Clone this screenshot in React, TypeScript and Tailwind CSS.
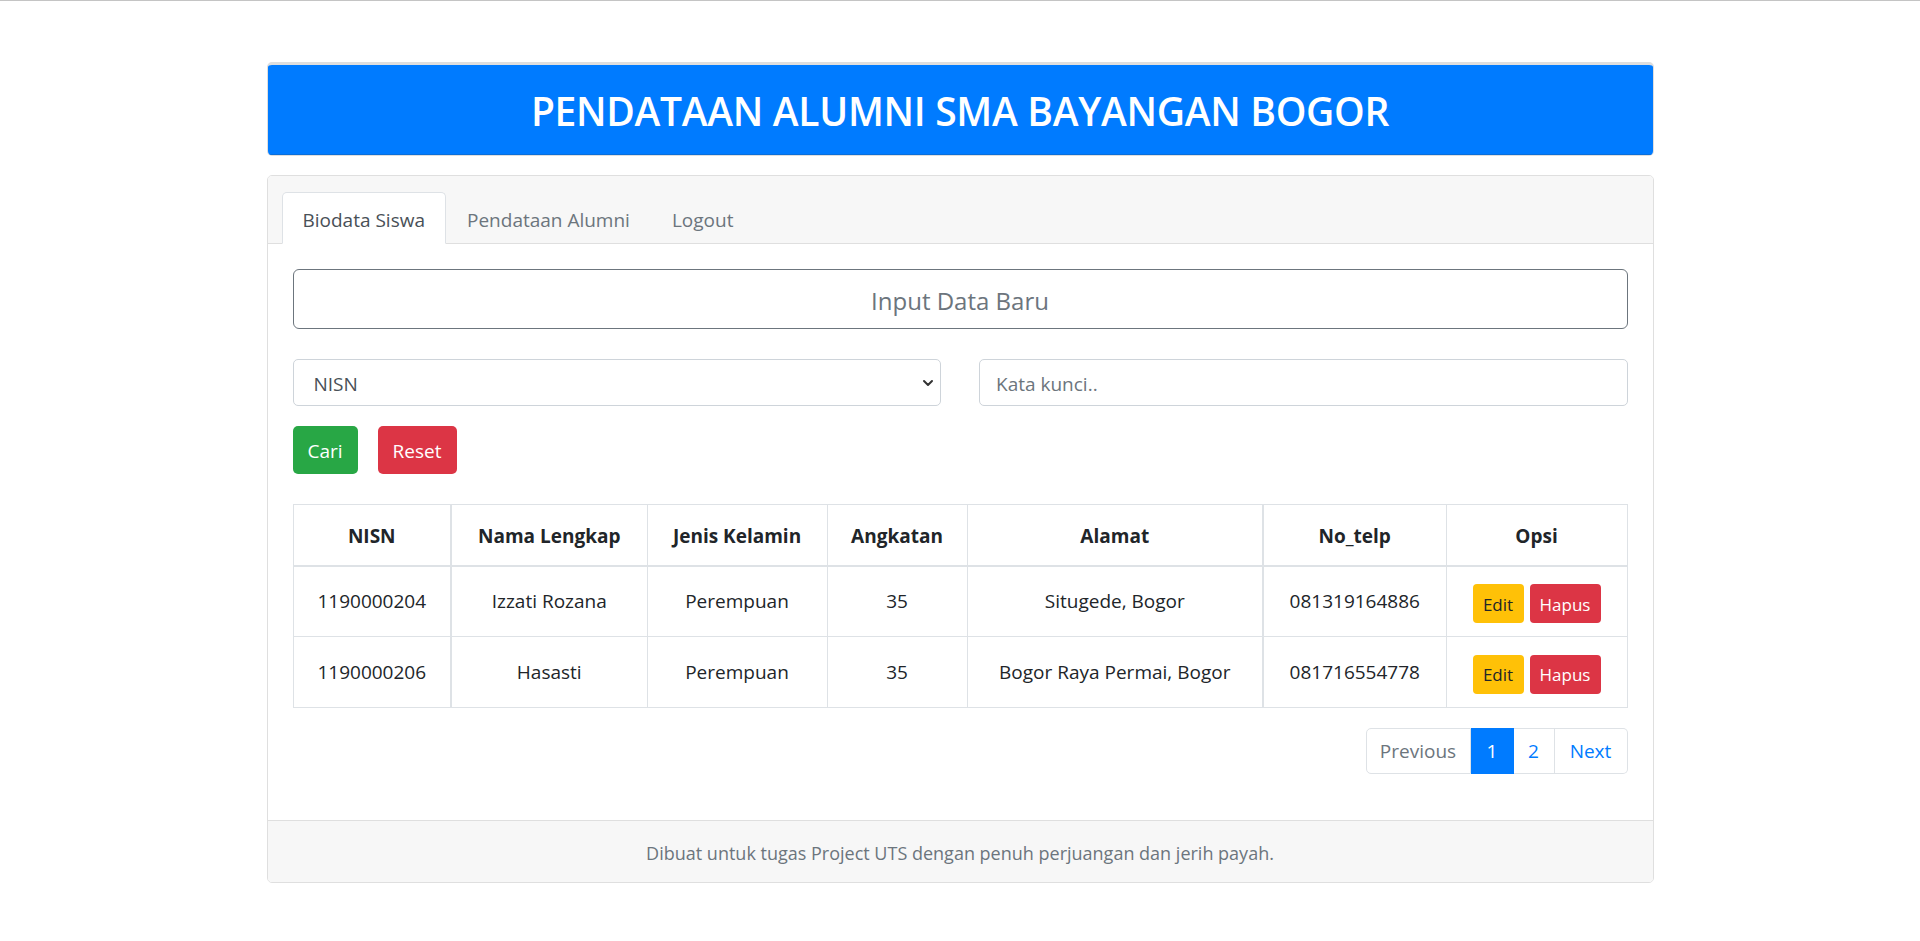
import { ChevronDown } from 'lucide-react';

interface Siswa {
  nisn: string;
  nama: string;
  jk: string;
  angkatan: string;
  alamat: string;
  telp: string;
}

const data: Siswa[] = [
  { nisn: '1190000204', nama: 'Izzati Rozana', jk: 'Perempuan', angkatan: '35', alamat: 'Situgede, Bogor', telp: '081319164886' },
  { nisn: '1190000206', nama: 'Hasasti', jk: 'Perempuan', angkatan: '35', alamat: 'Bogor Raya Permai, Bogor', telp: '081716554778' },
];

const headers = ['NISN', 'Nama Lengkap', 'Jenis Kelamin', 'Angkatan', 'Alamat', 'No_telp', 'Opsi'];

export default function App() {
  return (
    <div className="min-h-screen bg-white border-t border-[#c4c4c4] text-[#212529] font-['Open_Sans',sans-serif]">
      <div className="w-[1387px] mx-auto pt-[61px]">
        {/* Judul */}
        <div className="border-x border-b border-t-[3px] border-[#dedede] rounded-[5px] overflow-hidden">
          <div className="h-[90px] bg-[#007bff] border-b border-[#0a6ed9] flex items-center justify-center">
            <h2 className="text-[39px] leading-[48px] font-semibold text-white tracking-[-0.3px] pt-[2px]">
              PENDATAAN ALUMNI SMA BAYANGAN BOGOR
            </h2>
          </div>
        </div>

        {/* Konten */}
        <div className="mt-[19px] border border-[#dfdfdf] rounded-[5px] overflow-hidden">
          <div className="bg-[#f7f7f7] border-b border-[#dfdfdf] pt-[16px] pl-[14px] flex">
            <div className="h-[52px] -mb-px px-[20px] pt-[5px] flex items-center bg-white border border-[#dee2e6] border-b-white rounded-t-[5px] text-[19px] text-[#495057]">
              Biodata Siswa
            </div>
            <div className="h-[52px] -mb-px px-[20px] pt-[5px] flex items-center border border-transparent text-[19px] text-[#6c757d]">
              Pendataan Alumni
            </div>
            <div className="h-[52px] -mb-px px-[20px] pt-[5px] flex items-center border border-transparent text-[19px] text-[#6c757d]">
              Logout
            </div>
          </div>

          <div className="px-[25px] pt-[25px] pb-[46px]">
            <button className="w-full h-[60px] pt-[3px] border border-[#6c757d] rounded-[6px] text-[24px] text-[#6c757d] bg-white">
              Input Data Baru
            </button>

            <div className="mt-[30px] grid grid-cols-2 gap-x-[38px]">
              <div className="relative">
                <select className="w-full h-[47px] appearance-none border border-[#ced4da] rounded-[5px] pl-[20px] pr-[40px] pt-[3px] text-[19px] text-[#495057] bg-white outline-none">
                  <option>NISN</option>
                  <option>Nama Lengkap</option>
                  <option>Angkatan</option>
                </select>
                <ChevronDown className="absolute right-[5px] top-[16px] w-[16px] h-[16px] text-[#333]" strokeWidth={3} />
              </div>
              <input
                className="w-full h-[47px] border border-[#ced4da] rounded-[5px] px-[16px] pt-[3px] text-[19px] text-[#495057] placeholder:text-[#6c757d] outline-none"
                placeholder="Kata kunci.."
              />
            </div>

            <div className="mt-[20px] flex gap-[20px]">
              <button className="h-[48px] px-[15px] pt-[3px] rounded-[5px] bg-[#28a745] text-white text-[19px]">Cari</button>
              <button className="h-[48px] px-[15px] pt-[3px] rounded-[5px] bg-[#dc3545] text-white text-[19px]">Reset</button>
            </div>

            <table className="mt-[30px] w-full table-fixed border-collapse border border-[#dee2e6] text-[19px]">
              <colgroup>
                <col className="w-[158px]" />
                <col className="w-[196px]" />
                <col className="w-[180px]" />
                <col className="w-[140px]" />
                <col className="w-[296px]" />
                <col className="w-[183px]" />
                <col />
              </colgroup>
              <thead>
                <tr>
                  {headers.map((h, i) => (
                    <th
                      key={h}
                      className={`h-[61px] pt-[3px] border border-b-2 border-[#dee2e6] font-bold text-center ${i === 0 || i === 4 ? 'border-r-2' : ''}`}
                    >
                      {h}
                    </th>
                  ))}
                </tr>
              </thead>
              <tbody>
                {data.map((s) => (
                  <tr key={s.nisn}>
                    <td className="h-[71px] border border-r-2 border-[#dee2e6] text-center">{s.nisn}</td>
                    <td className="border border-[#dee2e6] text-center">{s.nama}</td>
                    <td className="border border-[#dee2e6] text-center">{s.jk}</td>
                    <td className="border border-[#dee2e6] text-center">{s.angkatan}</td>
                    <td className="border border-r-2 border-[#dee2e6] text-center">{s.alamat}</td>
                    <td className="border border-[#dee2e6] text-center">{s.telp}</td>
                    <td className="border border-[#dee2e6]">
                      <div className="flex justify-center gap-[6px] pt-[4px]">
                        <button className="h-[39px] w-[51px] pt-[2px] rounded-[4px] bg-[#ffc107] text-[#212529] text-[17px]">Edit</button>
                        <button className="h-[39px] w-[71px] pt-[2px] rounded-[4px] bg-[#dc3545] text-white text-[17px]">Hapus</button>
                      </div>
                    </td>
                  </tr>
                ))}
              </tbody>
            </table>

            <div className="mt-[20px] flex justify-end">
              <div className="flex h-[46px] text-[19px]">
                <span className="w-[105px] flex items-center justify-center border border-[#dee2e6] rounded-l-[5px] text-[#6c757d]">Previous</span>
                <span className="w-[43px] flex items-center justify-center bg-[#007bff] border border-[#007bff] text-white">1</span>
                <span className="w-[41px] flex items-center justify-center border-y border-r border-[#dee2e6] text-[#007bff]">2</span>
                <span className="w-[73px] flex items-center justify-center border-y border-r border-[#dee2e6] rounded-r-[5px] text-[#007bff]">Next</span>
              </div>
            </div>
          </div>

          <div className="bg-[#f7f7f7] border-t border-[#dfdfdf] h-[62px] pt-[3px] flex items-center justify-center text-[18px] text-[#6c757d]">
            Dibuat untuk tugas Project UTS dengan penuh perjuangan dan jerih payah.
          </div>
        </div>
      </div>
    </div>
  );
}
